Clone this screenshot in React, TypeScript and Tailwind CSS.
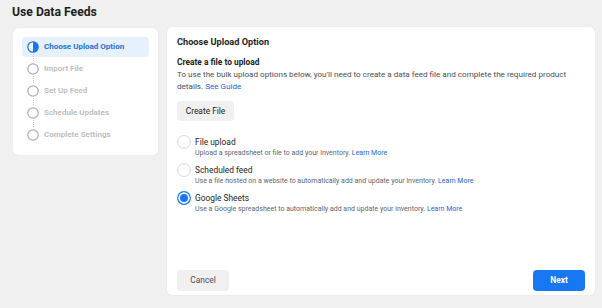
import React, { useState } from 'react';

const steps = ['Choose Upload Option', 'Import File', 'Set Up Feed', 'Schedule Updates', 'Complete Settings'];

const options = [
  { title: 'File upload', desc: 'Upload a spreadsheet or file to add your inventory.' },
  { title: 'Scheduled feed', desc: 'Use a file hosted on a website to automatically add and update your inventory.' },
  { title: 'Google Sheets', desc: 'Use a Google spreadsheet to automatically add and update your inventory.' },
];

const HalfCircle: React.FC = () => (
  <svg width="12" height="12" viewBox="0 0 12 12">
    <circle cx="6" cy="6" r="5.2" fill="#fff" stroke="#1877f2" strokeWidth="1.3" />
    <path d="M6 0.8 A5.2 5.2 0 0 1 6 11.2 Z" fill="#1877f2" />
  </svg>
);

const EmptyCircle: React.FC = () => (
  <svg width="12" height="12" viewBox="0 0 12 12">
    <circle cx="6" cy="6" r="5.2" fill="#fff" stroke="#a8abaf" strokeWidth="1.2" />
  </svg>
);

export default function App() {
  const [selected, setSelected] = useState(2);

  return (
    <div className="w-[602px] h-[308px] bg-[#f0f0f0] pl-[13px] pr-[6px] overflow-hidden" style={{ fontFamily: 'Roboto, "Liberation Sans", sans-serif' }}>
      <h1 className="h-[27px] pt-[4px] text-[12.2px] leading-[16px] font-bold text-[#1c1e21] -ml-[1px]">Use Data Feeds</h1>

      <div className="flex items-start gap-[9px]">
        {/* Steps */}
        <div className="w-[145px] shrink-0 mt-[1px] bg-white rounded-[5px] shadow-[0_0_1px_rgba(0,0,0,0.15)] px-[9px] pt-[9px] pb-[10px]">
          <div className="flex flex-col gap-[2px]">
            {steps.map((s, i) => (
              <div key={s} className="relative">
                <div
                  className={
                    i === 0
                      ? 'h-[20px] flex items-center gap-[5px] px-[5px] rounded-[4px] bg-[#e7f0fd]'
                      : 'h-[20px] flex items-center gap-[5px] px-[5px]'
                  }
                >
                  {i === 0 ? <HalfCircle /> : <EmptyCircle />}
                  <span
                    className={
                      i === 0
                        ? 'text-[8px] font-bold text-[#1d6fe0]'
                        : 'text-[8px] font-bold text-[#bcbfc2]'
                    }
                  >
                    {s}
                  </span>
                </div>
                {i < steps.length - 1 && (
                  <div className="absolute left-[10.5px] top-[16.5px] h-[7px] border-l border-dotted border-[#c4c6c9]" />
                )}
              </div>
            ))}
          </div>
        </div>

        {/* Main panel */}
        <div className="w-[428px] shrink-0 h-[268px] bg-white rounded-[5px] shadow-[0_0_1px_rgba(0,0,0,0.15)] px-[10px] pt-[8px] pb-[4px] flex flex-col">
          <h2 className="text-[9.2px] leading-[14px] font-bold text-[#1c1e21]">Choose Upload Option</h2>
          <p className="mt-[7px] text-[8.4px] leading-[12px] font-bold text-[#1c1e21]">Create a file to upload</p>
          <p className="text-[8.1px] leading-[12px] text-[#4b4f56] w-[400px]">
            To use the bulk upload options below, you'll need to create a data feed file and complete the required product details.{' '}
            <span className="text-[#2a64d8]">See Guide</span>
          </p>
          <div className="mt-[5px]">
            <button className="h-[20px] w-[57px] rounded-[4px] bg-[#f0f0f0] text-[8.4px] text-[#1c1e21]">Create File</button>
          </div>

          <div className="mt-[15px] flex flex-col gap-[5px]">
            {options.map((o, i) => (
              <div key={o.title} className="flex items-start gap-[4px] cursor-pointer" onClick={() => setSelected(i)}>
                <div className="w-[14px] h-[14px] mt-[-1px] shrink-0">
                  {selected === i ? (
                    <svg width="14" height="14" viewBox="0 0 14 14">
                      <circle cx="7" cy="7" r="6.3" fill="#fff" stroke="#1877f2" strokeWidth="1.2" />
                      <circle cx="7" cy="7" r="4" fill="#1877f2" />
                    </svg>
                  ) : (
                    <svg width="14" height="14" viewBox="0 0 14 14">
                      <circle cx="7" cy="7" r="6.4" fill="#fff" stroke="#d3d5d8" strokeWidth="1" />
                    </svg>
                  )}
                </div>
                <div>
                  <div className="text-[8.4px] leading-[12px] text-[#1c1e21]">{o.title}</div>
                  <div className="text-[7px] leading-[11px] text-[#606770]">
                    {o.desc} <span className="text-[#2a64d8]">Learn More</span>
                  </div>
                </div>
              </div>
            ))}
          </div>

          <div className="mt-auto flex justify-between">
            <button className="h-[21px] w-[52px] rounded-[4px] bg-[#f0f0f0] text-[8.4px] text-[#4b4f56]">Cancel</button>
            <button className="h-[21px] w-[52px] rounded-[4px] bg-[#1877f2] text-[8.4px] font-bold text-white">Next</button>
          </div>
        </div>
      </div>
    </div>
  );
}
